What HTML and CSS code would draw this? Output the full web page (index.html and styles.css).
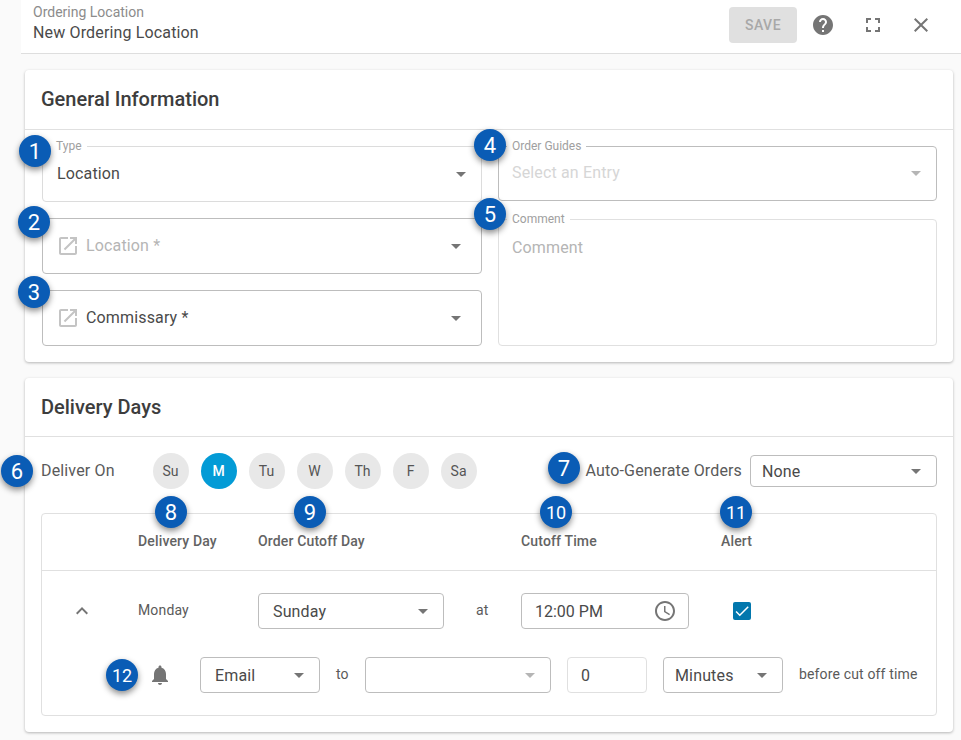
FILE: index.html
```html
<!DOCTYPE html>
<html lang="en">
<head>
<meta charset="utf-8">
<title>Ordering Location</title>
<link rel="stylesheet" href="styles.css">
</head>
<body>
<div class="shell">
  <header class="topbar">
    <div class="crumbs">
      <div class="crumb-type">Ordering Location</div>
      <div class="crumb-name">New Ordering Location</div>
    </div>
    <button class="save">SAVE</button>
    <span class="iconbtn help"><svg width="24" height="24" viewBox="0 0 24 24"><path d="M12 2C6.48 2 2 6.48 2 12s4.48 10 10 10 10-4.48 10-10S17.52 2 12 2zm1 17h-2v-2h2v2zm2.07-7.75l-.9.92C13.45 12.9 13 13.5 13 15h-2v-.5c0-1.1.45-2.1 1.17-2.83l1.24-1.26c.37-.36.59-.86.59-1.41 0-1.1-.9-2-2-2s-2 .9-2 2H8c0-2.21 1.79-4 4-4s4 1.79 4 4c0 .88-.36 1.68-.93 2.25z"/></svg></span>
    <span class="iconbtn"><svg width="24" height="24" viewBox="0 0 24 24"><path d="M7 14H5v5h5v-2H7v-3zm-2-4h2V7h3V5H5v5zm12 7h-3v2h5v-5h-2v3zM14 5v2h3v3h2V5h-5z"/></svg></span>
    <span class="iconbtn"><svg width="24" height="24" viewBox="0 0 24 24"><path d="M19 6.41L17.59 5 12 10.59 6.41 5 5 6.41 10.59 12 5 17.59 6.41 19 12 13.41 17.59 19 19 17.59 13.41 12z"/></svg></span>
  </header>

  <main class="content">
    <section class="card">
      <h2 class="card-title general">General Information</h2>
      <div class="form-grid">
        <div class="form-col">
          <div class="field field-light">
            <span class="legend">Type</span>
            <span class="value">Location</span>
            <i class="arrow"></i>
          </div>
          <div class="field field-link">
            <svg class="link-icon" width="24" height="24" viewBox="0 0 24 24"><path d="M19 19H5V5h7V3H5c-1.11 0-2 .9-2 2v14c0 1.1.89 2 2 2h14c1.1 0 2-.9 2-2v-7h-2v7zM14 3v2h3.59l-9.83 9.83 1.41 1.41L19 6.41V10h2V3h-7z"/></svg>
            <span class="value placeholder">Location *</span>
            <i class="arrow"></i>
          </div>
          <div class="field field-link">
            <svg class="link-icon" width="24" height="24" viewBox="0 0 24 24"><path d="M19 19H5V5h7V3H5c-1.11 0-2 .9-2 2v14c0 1.1.89 2 2 2h14c1.1 0 2-.9 2-2v-7h-2v7zM14 3v2h3.59l-9.83 9.83 1.41 1.41L19 6.41V10h2V3h-7z"/></svg>
            <span class="value">Commissary *</span>
            <i class="arrow"></i>
          </div>
        </div>
        <div class="form-col">
          <div class="field field-guides">
            <span class="legend">Order Guides</span>
            <span class="value placeholder-faint">Select an Entry</span>
            <i class="arrow arrow-faint"></i>
          </div>
          <div class="field field-comment">
            <span class="legend">Comment</span>
            <span class="value placeholder">Comment</span>
          </div>
        </div>
      </div>
    </section>

    <section class="card card-delivery">
      <h2 class="card-title delivery">Delivery Days</h2>
      <div class="deliver-row">
        <span class="deliver-label">Deliver On</span>
        <div class="chips">
          <span class="chip">Su</span>
          <span class="chip chip-on">M</span>
          <span class="chip">Tu</span>
          <span class="chip">W</span>
          <span class="chip">Th</span>
          <span class="chip">F</span>
          <span class="chip">Sa</span>
        </div>
        <span class="auto-label">Auto-Generate Orders</span>
        <div class="select select-none"><span>None</span><i class="arrow"></i></div>
      </div>

      <div class="days">
        <div class="days-head">
          <span></span>
          <span>Delivery Day</span>
          <span>Order Cutoff Day</span>
          <span>Cutoff Time</span>
          <span>Alert</span>
        </div>
        <div class="day-row">
          <svg class="chevron" width="24" height="24" viewBox="0 0 24 24"><path d="M7.41 15.41L12 10.83l4.59 4.58L18 14l-6-6-6 6z"/></svg>
          <span class="day-name">Monday</span>
          <div class="cutoff-day">
            <div class="select select-day"><span>Sunday</span><i class="arrow"></i></div>
            <span class="small-text">at</span>
          </div>
          <div class="select select-time"><span>12:00 PM</span>
            <svg width="24" height="24" viewBox="0 0 24 24"><path d="M11.99 2C6.47 2 2 6.48 2 12s4.47 10 9.99 10C17.52 22 22 17.52 22 12S17.52 2 11.99 2zM12 20c-4.42 0-8-3.58-8-8s3.58-8 8-8 8 3.58 8 8-3.58 8-8 8zm.5-13H11v6l5.25 3.15.75-1.23-4.5-2.67z"/></svg>
          </div>
          <span class="checkbox"><svg width="18" height="18" viewBox="0 0 24 24"><path d="M9 16.17L4.83 12l-1.42 1.41L9 19 21 7l-1.41-1.41z"/></svg></span>
        </div>
        <div class="alert-row">
          <svg class="bell" width="24" height="24" viewBox="0 0 24 24"><path d="M12 22c1.1 0 2-.9 2-2h-4c0 1.1.89 2 2 2zm6-6v-5c0-3.07-1.64-5.64-4.5-6.32V4c0-.83-.67-1.5-1.5-1.5s-1.5.67-1.5 1.5v.68C7.63 5.36 6 7.92 6 11v5l-2 2v1h16v-1l-2-2z"/></svg>
          <div class="select select-email"><span>Email</span><i class="arrow"></i></div>
          <span class="small-text to-text">to</span>
          <div class="select select-to"><span></span><i class="arrow arrow-faint"></i></div>
          <div class="select select-num"><span>0</span></div>
          <div class="select select-unit"><span>Minutes</span><i class="arrow"></i></div>
          <span class="small-text">before cut off time</span>
        </div>
      </div>
    </section>
  </main>
</div>

<span class="badge b1">1</span>
<span class="badge b2">2</span>
<span class="badge b3">3</span>
<span class="badge b4">4</span>
<span class="badge b5">5</span>
<span class="badge b6">6</span>
<span class="badge b7">7</span>
<span class="badge b8">8</span>
<span class="badge b9">9</span>
<span class="badge badge-sm b10">10</span>
<span class="badge badge-sm b11">11</span>
<span class="badge badge-sm b12">12</span>
</body>
</html>
```

FILE: styles.css
```css
* { box-sizing: border-box; }

html, body {
  margin: 0;
  height: 740px;
  overflow: hidden;
}

body {
  position: relative;
  background: #fafafa;
  font-family: Roboto, "Liberation Sans", sans-serif;
  letter-spacing: .15px;
  color: #4a4a4a;
}

.shell { margin-left: 21px; }

/* top bar */
.topbar {
  display: flex;
  align-items: center;
  height: 54px;
  padding: 0 16px 0 12px;
  background: #fff;
  border-bottom: 1px solid #dedede;
}

.crumbs { flex: 1; margin-top: -5px; }
.crumb-type { font-size: 14px; line-height: 16px; color: #8c8c8c; letter-spacing: 0; }
.crumb-name { margin-top: 1px; font-size: 16px; line-height: 24px; color: #4a4a4a; }

.save {
  width: 68px;
  height: 36px;
  margin: -3px 2px 0 0;
  border: 0;
  border-radius: 4px;
  background: #e0e0e0;
  color: #a8a8a8;
  font: 500 14px Roboto, sans-serif;
  letter-spacing: .5px;
}

.iconbtn {
  display: flex;
  justify-content: center;
  width: 48px;
  margin-top: -3px;
  fill: #757575;
}
.help { margin-right: 2px; }

/* cards */
.content { padding: 16px 8px 0 4px; }

.card {
  background: #fff;
  border-radius: 4px;
  box-shadow: 0 1px 3px rgba(0, 0, 0, .28);
}
.card-delivery { margin-top: 16px; height: 354px; }

.card-title {
  margin: 0;
  padding-left: 16px;
  font-size: 20px;
  font-weight: 500;
  letter-spacing: 0;
  color: #3d3d3d;
  border-bottom: 1px solid #e0e0e0;
}
.card-title.general { height: 60px; line-height: 58px; }
.card-title.delivery { height: 59px; line-height: 58px; }

.form-grid {
  display: grid;
  grid-template-columns: 440px 439px;
  gap: 16px;
  padding: 16px 16px 16px 17px;
}

.form-col {
  display: flex;
  flex-direction: column;
  gap: 16px;
  height: 200px;
}

/* outlined fields */
.field {
  position: relative;
  display: flex;
  align-items: center;
  flex: none;
  height: 56px;
  padding: 0 15px 0 14px;
  border: 1px solid #bdbdbd;
  border-radius: 4px;
  font-size: 16px;
}
.field-light { border-color: #dcdcdc; }
.field-guides { height: 55px; padding-left: 13px; }
.field-link { padding-left: 13px; padding-right: 20px; }
.field-comment {
  flex: 1;
  margin-top: 2px;
  align-items: flex-start;
  padding: 18px 15px 0 13px;
  border-color: #e0e0e0;
}

.legend {
  position: absolute;
  top: -7px;
  left: 8px;
  padding: 0 5px;
  background: #fff;
  font-size: 12px;
  line-height: 12px;
  letter-spacing: 0;
  color: #a0a0a0;
}

.value { flex: 1; margin-bottom: 2px; }
.field-comment .value { margin-bottom: 0; }
.placeholder { color: #b5b5b5; }
.placeholder-faint { color: #d6d6d6; }
.link-icon { margin-right: 6px; fill: #c4c4c4; }

.arrow {
  flex: none;
  width: 0;
  height: 0;
  border-left: 5px solid transparent;
  border-right: 5px solid transparent;
  border-top: 5px solid #757575;
}
.arrow-faint { border-top-color: #b5b5b5; }

/* deliver row */
.deliver-row {
  display: flex;
  align-items: center;
  height: 36px;
  margin: 16px 16px 24px;
}
.deliver-label { width: 112px; margin-bottom: 2px; font-size: 16px; color: #5a5a5a; }
.chips { display: flex; gap: 12px; }
.chip {
  display: flex;
  align-items: center;
  justify-content: center;
  width: 36px;
  height: 36px;
  border-radius: 50%;
  background: #e8e8e8;
  font-size: 14px;
  letter-spacing: 0;
  color: #555;
}
.chip-on { background: #039bd6; color: #fff; font-weight: 500; }
.auto-label { margin: 0 0 2px 109px; font-size: 16px; color: #5a5a5a; white-space: nowrap; }

/* selects */
.select {
  display: flex;
  align-items: center;
  justify-content: space-between;
  flex: none;
  height: 36px;
  padding: 0 15px 0 14px;
  border: 1px solid #bdbdbd;
  border-radius: 4px;
  background: #fff;
  font-size: 16px;
  color: #4a4a4a;
}
.select-none { width: 187px; height: 32px; margin-left: 8px; padding-left: 11px; }
.select-day { width: 186px; }
.select-time { width: 168px; padding: 0 11px 0 13px; letter-spacing: 0; }
.select-time svg { fill: #757575; }
.select-email { width: 120px; }
.select-to { width: 186px; }
.select-num { width: 80px; padding-left: 13px; border-color: #e0e0e0; }
.select-unit { width: 120px; padding-left: 11px; }

/* days table */
.days {
  height: 203px;
  margin: 0 16px;
  border: 1px solid #e0e0e0;
  border-radius: 4px;
}

.days-head,
.day-row {
  display: grid;
  grid-template-columns: 96px 120px 263px 200px 1fr;
}

.days-head {
  height: 57px;
  padding-top: 19px;
  border-bottom: 1px solid #e0e0e0;
  font-size: 14px;
  font-weight: 500;
  line-height: 16px;
  color: #636363;
}

.day-row {
  align-items: center;
  height: 36px;
  margin-top: 22px;
}

.chevron { margin-left: 28px; fill: #757575; }
.day-name { margin-bottom: 2px; font-size: 14px; color: #5a5a5a; }
.cutoff-day { display: flex; align-items: center; gap: 32px; }
.small-text { margin-bottom: 2px; font-size: 14px; color: #5a5a5a; white-space: nowrap; }
.to-text { width: 13px; }

.checkbox {
  display: flex;
  align-items: center;
  justify-content: center;
  width: 18px;
  height: 18px;
  margin-left: 12px;
  border-radius: 2px;
  background: #0277ad;
  fill: #fff;
}

.alert-row {
  display: flex;
  align-items: center;
  gap: 16px;
  margin-top: 28px;
  padding-left: 106px;
}
.bell { margin-right: 12px; fill: #757575; }

/* callout badges */
.badge {
  position: absolute;
  display: flex;
  align-items: center;
  justify-content: center;
  width: 32px;
  height: 32px;
  border-radius: 50%;
  background: #0a5cb5;
  box-shadow: 0 3px 6px rgba(0, 0, 0, .45);
  font-size: 22px;
  letter-spacing: 0;
  color: #fff;
}
.badge-sm { font-size: 18px; }

.b1 { left: 19px; top: 135px; }
.b2 { left: 18px; top: 206px; }
.b3 { left: 18px; top: 276px; }
.b4 { left: 474px; top: 129px; }
.b5 { left: 474px; top: 198px; }
.b6 { left: 1px; top: 455px; }
.b7 { left: 548px; top: 452px; }
.b8 { left: 155px; top: 496px; }
.b9 { left: 294px; top: 496px; }
.b10 { left: 540px; top: 496px; }
.b11 { left: 720px; top: 496px; }
.b12 { left: 106px; top: 659px; }
```
